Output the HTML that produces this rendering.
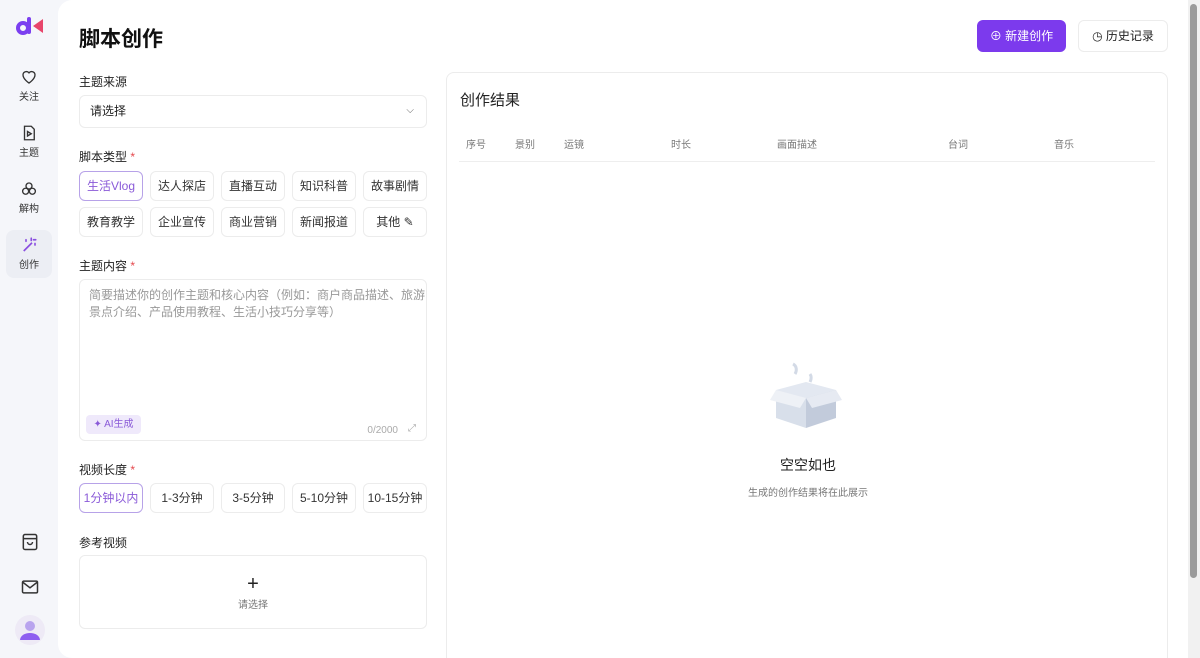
<!DOCTYPE html>
<html><head><meta charset="utf-8"><style>
*{box-sizing:border-box;margin:0;padding:0}
html,body{width:1200px;height:658px;overflow:hidden}
body{background:#f5f6fa;font-family:"Liberation Sans","Noto Sans CJK SC",sans-serif;color:#222;position:relative}
.side{position:absolute;left:0;top:0;width:58px;height:658px}
.nav{position:absolute;left:6px;width:46px;height:48px;border-radius:8px;text-align:center;font-size:10px;color:#333}
.nav svg{display:block;margin:6px auto 2px}
.main{position:absolute;left:58px;top:0;width:1130px;height:658px;background:#fff;border-radius:14px 0 0 14px}
.sb{position:absolute;right:0;top:0;width:12px;height:658px;background:#f1f1f1}
.sb div{position:absolute;left:2px;top:4px;width:7px;height:574px;background:#9b9b9b;border-radius:4px}
.a{position:absolute}
h1{position:absolute;left:79px;top:23px;font-size:21px;font-weight:700;color:#111}
.lbl{position:absolute;left:79px;font-size:12px;color:#222}
.lbl i{color:#e5484d;font-style:normal}
.box{position:absolute;border:1px solid #ececec;border-radius:6px;background:#fff}
.btn{position:absolute;width:64px;height:30px;border:1px solid #ececec;border-radius:6px;font-size:12px;text-align:center;line-height:28px;color:#333}
.btn.on{border-color:#b7a2e8;color:#8a5ad8}
.th{position:absolute;top:136px;font-size:10px;color:#777}
</style></head><body>
<div class="side">
<svg class="a" style="left:16px;top:16px" width="28" height="20" viewBox="0 0 28 20"><circle cx="7" cy="12" r="5" fill="none" stroke="#7b3ff0" stroke-width="4"/><rect x="11" y="1" width="4" height="17" rx="2" fill="#7b3ff0"/><path d="M17 10 L27 3 V17 Z" fill="#e8456b"/></svg>
<div class="nav" style="top:62px"><svg width="18" height="18" viewBox="0 0 24 24" fill="none" stroke="#333" stroke-width="1.8"><path d="M12 20s-8-5-8-11a4.5 4.5 0 0 1 8-2.5A4.5 4.5 0 0 1 20 9c0 6-8 11-8 11z"/></svg>关注</div>
<div class="nav" style="top:118px"><svg width="18" height="18" viewBox="0 0 24 24" fill="none" stroke="#333" stroke-width="1.8"><path d="M6 3h9l4 4v14H6z"/><path d="M10 10l5 3-5 3z"/></svg>主题</div>
<div class="nav" style="top:174px"><svg width="18" height="18" viewBox="0 0 24 24" fill="none" stroke="#333" stroke-width="1.8"><circle cx="12" cy="8" r="4"/><circle cx="7.5" cy="15" r="4"/><circle cx="16.5" cy="15" r="4"/></svg>解构</div>
<div class="nav" style="top:230px;background:#eceef4;height:48px"><svg width="18" height="18" viewBox="0 0 24 24" fill="none" stroke="#8a4fe0" stroke-width="2.2"><path d="M5 20L16 9"/><path d="M15 3v3M18 5h3M20 10v2M8 5v2" stroke-linecap="round"/></svg>创作</div>
<svg class="a" style="left:20px;top:532px" width="20" height="20" viewBox="0 0 24 24" fill="none" stroke="#333" stroke-width="1.8"><rect x="4" y="3" width="16" height="18" rx="2"/><path d="M4 8h16M9 12a3 3 0 0 0 6 0"/></svg>
<svg class="a" style="left:20px;top:577px" width="20" height="20" viewBox="0 0 24 24" fill="none" stroke="#333" stroke-width="1.8"><rect x="3" y="5" width="18" height="14" rx="1.5"/><path d="M3 6l9 7 9-7"/></svg>
<svg class="a" style="left:15px;top:615px" width="30" height="30" viewBox="0 0 30 30"><circle cx="15" cy="15" r="15" fill="#eeeaf6"/><circle cx="15" cy="11" r="5" fill="#b9a3ee"/><path d="M5 25a10 7 0 0 1 20 0z" fill="#8e5ef0"/></svg>
</div>
<div class="main"></div>
<div class="sb"><div></div></div>
<h1>脚本创作</h1>
<div class="a" style="left:977px;top:20px;width:89px;height:32px;background:#7c3aed;border-radius:6px;color:#fff;font-size:12px;line-height:32px;text-align:center">⊕ 新建创作</div>
<div class="box" style="left:1078px;top:20px;width:90px;height:32px;font-size:12px;line-height:30px;text-align:center;color:#222">◷ 历史记录</div>

<div class="lbl" style="top:73px">主题来源</div>
<div class="box" style="left:79px;top:95px;width:348px;height:33px;font-size:12px;line-height:31px;padding-left:10px">请选择<span style="position:absolute;right:12px;top:-1px;color:#666;font-size:10px">⌵</span></div>

<div class="lbl" style="top:148px">脚本类型 <i>*</i></div>
<div class="btn on" style="left:79px;top:171px">生活Vlog</div>
<div class="btn" style="left:150px;top:171px">达人探店</div>
<div class="btn" style="left:221px;top:171px">直播互动</div>
<div class="btn" style="left:292px;top:171px">知识科普</div>
<div class="btn" style="left:363px;top:171px">故事剧情</div>
<div class="btn" style="left:79px;top:207px">教育教学</div>
<div class="btn" style="left:150px;top:207px">企业宣传</div>
<div class="btn" style="left:221px;top:207px">商业营销</div>
<div class="btn" style="left:292px;top:207px">新闻报道</div>
<div class="btn" style="left:363px;top:207px">其他 ✎</div>

<div class="lbl" style="top:257px">主题内容 <i>*</i></div>
<div class="box" style="left:79px;top:279px;width:348px;height:162px;padding:7px 0 7px 9px;font-size:12px;line-height:17px;color:#999">简要描述你的创作主题和核心内容（例如：商户商品描述、旅游景点介绍、产品使用教程、生活小技巧分享等）
<div class="a" style="left:6px;top:135px;width:55px;height:19px;background:#efe9fb;border-radius:4px;color:#8a5ad8;font-size:10px;line-height:19px;text-align:center">✦ AI生成</div>
<div class="a" style="right:28px;top:142px;font-size:10px;color:#aaa">0/2000</div>
<div class="a" style="right:10px;top:140px;font-size:10px;color:#aaa">⤢</div>
</div>

<div class="lbl" style="top:461px">视频长度 <i>*</i></div>
<div class="btn on" style="left:79px;top:483px">1分钟以内</div>
<div class="btn" style="left:150px;top:483px">1-3分钟</div>
<div class="btn" style="left:221px;top:483px">3-5分钟</div>
<div class="btn" style="left:292px;top:483px">5-10分钟</div>
<div class="btn" style="left:363px;top:483px">10-15分钟</div>

<div class="lbl" style="top:534px">参考视频</div>
<div class="box" style="left:79px;top:555px;width:348px;height:74px;text-align:center">
<div style="font-size:20px;line-height:20px;margin-top:18px;color:#222">+</div>
<div style="font-size:10px;color:#777;margin-top:2px">请选择</div></div>

<div class="box" style="left:446px;top:72px;width:722px;height:600px;border-radius:8px"></div>
<div class="a" style="left:460px;top:89px;font-size:15px;color:#222">创作结果</div>
<div class="th" style="left:466px">序号</div><div class="th" style="left:515px">景别</div><div class="th" style="left:564px">运镜</div><div class="th" style="left:671px">时长</div><div class="th" style="left:777px">画面描述</div><div class="th" style="left:948px">台词</div><div class="th" style="left:1054px">音乐</div>
<div class="a" style="left:459px;top:161px;width:696px;height:1px;background:#eee"></div>

<svg class="a" style="left:770px;top:360px" width="72" height="70" viewBox="0 0 72 70"><path d="M23 4c4 2 4 7 2 10" stroke="#d3dae6" stroke-width="3" fill="none"/><path d="M40 14c2 3 1 6 0 8" stroke="#d3dae6" stroke-width="3" fill="none"/><path d="M6 30L36 22 66 30 36 38z" fill="#e3e8f1"/><path d="M6 30v28l30 10V38z" fill="#d8dfea"/><path d="M66 30v28L36 68V38z" fill="#c2cbdb"/><path d="M6 30L0 40l30 8 6-10z" fill="#eef1f6"/><path d="M66 30l6 10-30 8-6-10z" fill="#e6eaf2"/></svg>
<div class="a" style="left:780px;top:455px;font-size:14px;color:#222">空空如也</div>
<div class="a" style="left:748px;top:484px;font-size:10px;color:#777">生成的创作结果将在此展示</div>
</body></html>
